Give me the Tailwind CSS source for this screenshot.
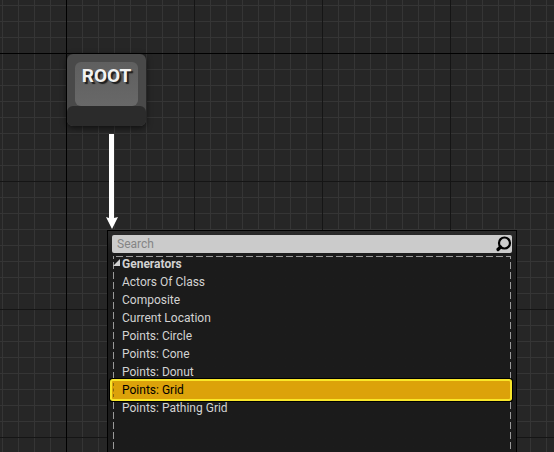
<!DOCTYPE html>
<html lang="en">
<head>
<meta charset="utf-8">
<title>Environment Query Graph</title>
<script src="https://cdn.jsdelivr.net/npm/@tailwindcss/browser@4"></script>
</head>
<body class="bg-[#262626] font-[Roboto,'Liberation_Sans',sans-serif]">
<main class="relative h-screen overflow-hidden">
  <svg class="absolute inset-0 size-full" aria-hidden="true" shape-rendering="crispEdges">
    <defs>
      <pattern id="minor" x="2" y="5" width="16" height="16" patternUnits="userSpaceOnUse">
        <path d="M0 0h16v1H0zM0 0h1v16H0z" fill="#353535"/>
      </pattern>
      <pattern id="major" x="66" y="53" width="128" height="128" patternUnits="userSpaceOnUse">
        <path d="M0 0h128v1H0zM0 0h1v128H0z" fill="#151515"/>
      </pattern>
    </defs>
    <rect width="100%" height="100%" fill="url(#minor)"/>
    <rect width="100%" height="100%" fill="url(#major)"/>
    <rect y="53" width="100%" height="1" fill="#000"/>
    <rect x="66" width="1" height="100%" fill="#000"/>
  </svg>

  <section class="absolute left-[67px] top-[54px] flex w-[79px] flex-col rounded-md bg-[#494949] shadow-[0_2px_6px_rgba(0,0,0,0.6)]">
    <div class="px-2 pt-2">
      <h1 class="h-11 rounded-md bg-linear-to-b from-[#5f5f5f] to-[#686868] pt-0.5 text-center text-[19px]/6 font-bold text-[#f2f2f2] [text-shadow:2px_2px_1px_#1c1c1c]">ROOT</h1>
    </div>
    <div class="h-5 rounded-md bg-[#2b2b2b]"></div>
  </section>

  <svg class="absolute left-[106px] top-[134px]" width="12" height="95" viewBox="0 0 12 95" aria-hidden="true">
    <path d="M3 0h5v84l4-1L6 95 0 83l3 1z" fill="#fff"/>
  </svg>

  <section class="absolute bottom-0 left-[107px] top-[230px] w-[410px] border border-b-0 border-black bg-linear-to-b from-[#2a2a2a] to-[#1b1b1b] to-10% px-1 pt-1">
    <label class="flex h-[18px] items-center rounded-xs bg-[#cbcbcb] pl-[5px]">
      <input type="text" aria-label="Search" placeholder="Search" class="min-w-0 flex-1 bg-transparent text-xs text-black outline-none placeholder:text-[#858585]">
      <svg class="size-[18px]" viewBox="0 0 18 18" fill="none" stroke="#000" aria-hidden="true">
        <circle cx="10.500" cy="8" r="5.500" stroke-width="2.200"/>
        <path d="M6.500 12 4 14.500" stroke-width="3.200" stroke-linecap="round"/>
      </svg>
    </label>
    <div class="relative h-full pt-0.5">
      <svg class="absolute inset-0 size-full" aria-hidden="true" shape-rendering="crispEdges">
        <defs>
          <pattern id="dashX" x="4" y="0" width="10" height="10" patternUnits="userSpaceOnUse"><path d="M0 0h7v10H0z" fill="#9a9a9a"/></pattern>
          <pattern id="dashY" x="0" y="-1" width="10" height="10" patternUnits="userSpaceOnUse"><path d="M0 0h10v7H0z" fill="#9a9a9a"/></pattern>
        </defs>
        <rect x="1" y="3" width="398" height="1" fill="url(#dashX)"/>
        <rect x="1" y="3" width="1" height="100%" fill="url(#dashY)"/>
        <rect x="398" y="3" width="1" height="100%" fill="url(#dashY)"/>
      </svg>
      <div class="relative pr-0.5 text-xs/[18px] text-[#d2d2d2]">
        <h2 class="flex font-bold">
          <svg class="mt-1 h-2 w-2.5" viewBox="0 0 10 8" aria-hidden="true"><path d="M8 0v7H1z" fill="#d0d0d0"/></svg>
          Generators
        </h2>
        <ul>
          <li><button type="button" class="block w-full pl-2.5 text-left">Actors Of Class</button></li>
          <li><button type="button" class="block w-full pl-2.5 text-left">Composite</button></li>
          <li><button type="button" class="block w-full pl-2.5 text-left">Current Location</button></li>
          <li><button type="button" class="block w-full pl-2.5 text-left">Points: Circle</button></li>
          <li><button type="button" class="block w-full pl-2.5 text-left">Points: Cone</button></li>
          <li><button type="button" class="block w-full pl-2.5 text-left">Points: Donut</button></li>
          <li><button type="button" class="relative block w-full rounded-[1px] bg-[#dca20a] pl-2.5 text-left text-black shadow-[0_0_0_2px_#f8e62a,0_0_0_3px_#000]">
            <span class="absolute inset-y-0.5 left-px w-0.5 border-l border-dashed border-[#8a6a10]"></span>Points: Grid</button></li>
          <li><button type="button" class="block w-full pl-2.5 text-left">Points: Pathing Grid</button></li>
        </ul>
      </div>
    </div>
  </section>
</main>
</body>
</html>
